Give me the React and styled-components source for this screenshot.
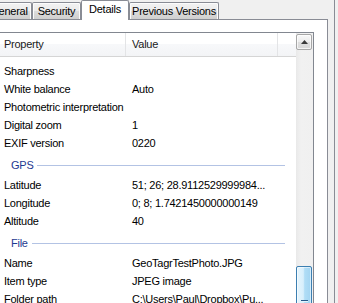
import React from 'react';
import styled, { createGlobalStyle } from 'styled-components';

const GlobalStyle = createGlobalStyle`
  html, body {
    margin: 0;
    padding: 0;
    width: 338px;
    height: 303px;
    overflow: hidden;
    background: #f0f0f0;
  }
  body {
    font-family: "Liberation Sans", Arial, sans-serif;
    font-size: 11px;
    letter-spacing: -0.25px;
    color: #000;
  }
  #root { width: 338px; height: 303px; }
  * { box-sizing: border-box; }
`;

const Window = styled.div`
  display: flex;
  width: 338px;
  height: 303px;
  overflow: hidden;
`;

const Main = styled.div`
  display: flex;
  flex-direction: column;
  flex: 0 0 350px;
  margin-left: -16px;
`;

const Edge = styled.div`
  flex: 0 0 1px;
  background: #898c95;
`;

const TabStrip = styled.div`
  display: flex;
  align-items: flex-end;
  height: 19px;
  padding-left: 2px;
`;

const Tab = styled.div`
  flex: 0 0 ${p => p.$w}px;
  height: ${p => (p.$active ? 20 : 17)}px;
  margin-bottom: ${p => (p.$active ? -1 : 0)}px;
  position: relative;
  z-index: ${p => (p.$active ? 2 : 1)};
  border: 1px solid #898c95;
  border-bottom: none;
  border-radius: 2px 2px 0 0;
  background: ${p =>
    p.$active
      ? '#ffffff'
      : 'linear-gradient(#f2f2f2, #ebebeb 50%, #dddddd 50%, #cfcfcf)'};
  box-shadow: ${p => (p.$active ? 'none' : 'inset 1px 1px 0 #fcfcfc, inset -1px 0 0 #fcfcfc')};
  display: flex;
  justify-content: center;
  align-items: flex-start;
  padding-top: ${p => (p.$active ? 2 : 2)}px;
  line-height: 13px;
  white-space: nowrap;
  color: #000;
`;

const Panel = styled.div`
  flex: 1;
  width: 344px;
  background: #fff;
  border: 1px solid #898c95;
  border-bottom: none;
  padding: 12px 13px 0 12px;
  display: flex;
  flex-direction: column;
`;

const List = styled.div`
  flex: 1;
  display: flex;
  border: 1px solid #828790;
  border-bottom: none;
  overflow: hidden;
`;

const Content = styled.div`
  flex: 1;
  display: flex;
  flex-direction: column;
`;

const Header = styled.div`
  display: flex;
  height: 24px;
  border-bottom: 1px solid #d5d5d5;
  background: linear-gradient(#ffffff, #ffffff 50%, #f7f8fa 50%, #f3f4f6);
`;

const HeaderCell = styled.div`
  flex: ${p => (p.$w ? `0 0 ${p.$w}px` : '1')};
  border-right: ${p => (p.$w ? '1px solid #e3e4e6' : 'none')};
  padding-left: 6px;
  line-height: 22px;
  color: #1a1a1a;
  white-space: nowrap;
`;

const Body = styled.div`
  display: flex;
  flex-direction: column;
  padding-top: 5px;
`;

const Row = styled.div`
  display: flex;
  height: 18px;
  line-height: 18px;
  white-space: nowrap;
`;

const Cell = styled.div`
  flex: ${p => (p.$w ? `0 0 ${p.$w}px` : '1')};
  padding-left: 6px;
  overflow: hidden;
`;

const GroupHeader = styled.div`
  display: flex;
  align-items: center;
  height: 24px;
  padding: 2px 11px 0 13px;
  color: #1e3991;
`;

const GroupLine = styled.div`
  flex: 1;
  height: 1px;
  margin-left: 4px;
  background: #b3c3e4;
`;

const ScrollBar = styled.div`
  flex: 0 0 17px;
  display: flex;
  flex-direction: column;
  background: linear-gradient(to right, #e9e9e9, #f1f1f1 30%, #f0f0f0);
`;

const ArrowButton = styled.div`
  height: 16px;
  margin: 1px 1px 0 0;
  border: 1px solid #a7a7a7;
  border-radius: 2px;
  background: linear-gradient(#f8f8f8, #ececec 50%, #dedede 50%, #d9d9d9);
  box-shadow: inset 0 0 0 1px rgba(255, 255, 255, 0.7);
  display: flex;
  align-items: center;
  justify-content: center;
`;

const Thumb = styled.div`
  height: 80px;
  margin: ${p => p.$top}px 1px 0 0;
  border: 1px solid #3c7fb1;
  border-radius: 2px;
  background: linear-gradient(to right, #e6f5fd, #d8effc 45%, #b0ddf6 55%, #a2d4f1);
  box-shadow: inset 0 0 0 1px rgba(255, 255, 255, 0.55);
  display: flex;
  flex-direction: column;
  align-items: center;
`;

const Grip = styled.div`
  width: 7px;
  height: 2px;
  margin-top: 33px;
  border-top: 1px solid #26598a;
  border-bottom: 1px solid #e4f4fd;
`;

const tabs = [
  { label: 'General', w: 46 },
  { label: 'Security', w: 49 },
  { label: 'Details', w: 48, active: true },
  { label: 'Previous Versions', w: 90 },
];

const groups = [
  {
    rows: [
      ['Sharpness', ''],
      ['White balance', 'Auto'],
      ['Photometric interpretation', ''],
      ['Digital zoom', '1'],
      ['EXIF version', '0220'],
    ],
  },
  {
    title: 'GPS',
    rows: [
      ['Latitude', '51; 26; 28.9112529999984...'],
      ['Longitude', '0; 8; 1.7421450000000149'],
      ['Altitude', '40'],
    ],
  },
  {
    title: 'File',
    rows: [
      ['Name', 'GeoTagrTestPhoto.JPG'],
      ['Item type', 'JPEG image'],
      ['Folder path', 'C:\\Users\\Paul\\Dropbox\\Pu...'],
    ],
  },
];

const UpArrow = () => (
  <svg width="7" height="4" viewBox="0 0 7 4">
    <path d="M0 4 L3.5 0 L7 4 Z" fill="#3a3a3a" />
  </svg>
);

export default function App() {
  return (
    <>
      <GlobalStyle />
      <Window>
        <Main>
          <TabStrip>
            {tabs.map(t => (
              <Tab key={t.label} $w={t.w} $active={t.active}>
                {t.label}
              </Tab>
            ))}
          </TabStrip>
          <Panel>
            <List>
              <Content>
                <Header>
                  <HeaderCell $w={128}>Property</HeaderCell>
                  <HeaderCell $w={152}>Value</HeaderCell>
                  <HeaderCell />
                </Header>
                <Body>
                  {groups.map((g, gi) => (
                    <React.Fragment key={gi}>
                      {g.title && (
                        <GroupHeader>
                          {g.title}
                          <GroupLine />
                        </GroupHeader>
                      )}
                      {g.rows.map(([k, v]) => (
                        <Row key={k}>
                          <Cell $w={128}>{k}</Cell>
                          <Cell>{v}</Cell>
                        </Row>
                      ))}
                    </React.Fragment>
                  ))}
                </Body>
              </Content>
              <ScrollBar>
                <ArrowButton>
                  <UpArrow />
                </ArrowButton>
                <Thumb $top={216}>
                  <Grip />
                </Thumb>
              </ScrollBar>
            </List>
          </Panel>
        </Main>
        <Edge />
      </Window>
    </>
  );
}
